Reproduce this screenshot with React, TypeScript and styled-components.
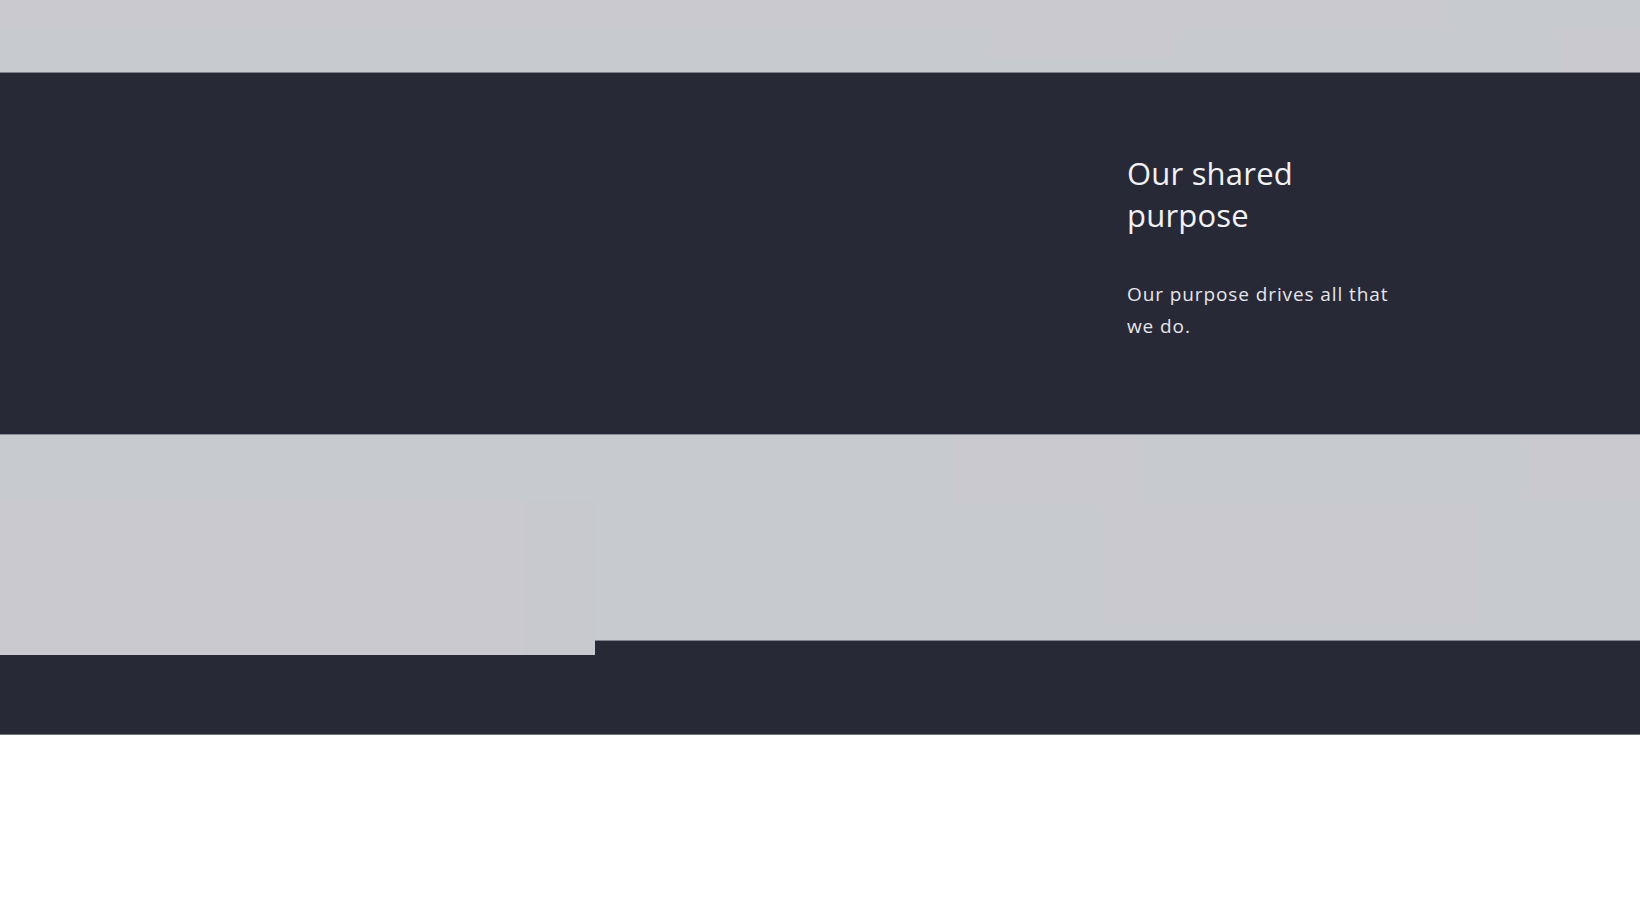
import React from "react";
import styled, { createGlobalStyle } from "styled-components";

const GlobalStyle = createGlobalStyle`
  html, body { margin: 0; padding: 0; background: #ffffff; }
  body { font-family: "Open Sans", "Noto Sans", sans-serif; -webkit-font-smoothing: antialiased; }
  * { box-sizing: border-box; }
`;

const PINK = "#cac9cf";
const BLUE = "#c7cacf";

const rect = (x: number, y: number, w: number, h: number, c: string) =>
  `linear-gradient(${c}, ${c}) ${x}px ${y}px / ${w}px ${h}px no-repeat`;

const Page = styled.div`
  display: flex;
  flex-direction: column;
  width: 100%;
`;

const TopBand = styled.div`
  height: 73px;
  border-bottom: 1px solid #7f828e;
  background:
    ${rect(1443, 0, 197, 28, BLUE)},
    ${rect(0, 0, 1640, 30, PINK)},
    ${rect(990, 30, 190, 28, PINK)},
    ${rect(1560, 30, 80, 42, PINK)},
    ${BLUE};
`;

const Hero = styled.section`
  height: 361px;
  background: #272936;
  display: grid;
  grid-template-columns: 1127px 276px 1fr;
  padding-top: 79px;
`;

const HeroMedia = styled.div``;

const HeroText = styled.div`
  display: flex;
  flex-direction: column;
  gap: 42px;
`;

const Title = styled.h2`
  margin: 0;
  font-family: "Open Sans", "Noto Sans", sans-serif;
  font-weight: 400;
  font-size: 31px;
  line-height: 42px;
  letter-spacing: 0.2px;
  color: #f2f2f4;
`;

const Lead = styled.p`
  margin: 0;
  font-family: "Open Sans", "Noto Sans", sans-serif;
  font-weight: 400;
  font-size: 19px;
  line-height: 32px;
  letter-spacing: 0.9px;
  color: #e6e6ea;
`;

const Gallery = styled.section`
  height: 206px;
  border-top: 1px solid #8a8d98;
  display: flex;
  align-items: flex-start;
  background:
    ${rect(951, 0, 188, 70, PINK)},
    ${rect(1523, 0, 117, 66, PINK)},
    ${rect(1102, 70, 382, 120, PINK)},
    ${BLUE};
`;

const GalleryCard = styled.div`
  width: 595px;
  height: 220px;
  margin-bottom: -14px;
  position: relative;
  z-index: 1;
  background:
    ${rect(89, 66, 434, 154, PINK)},
    ${rect(0, 0, 595, 66, BLUE)},
    ${rect(0, 66, 89, 154, "#c9c9cf")},
    #c8c9cf;
`;

const Footer = styled.footer`
  height: 95px;
  background: #272936;
  border-top: 1px solid #80838e;
  border-bottom: 1px solid #6f7280;
`;

export default function App() {
  return (
    <Page>
      <GlobalStyle />
      <TopBand />
      <Hero>
        <HeroMedia />
        <HeroText>
          <Title>Our shared purpose</Title>
          <Lead>Our purpose drives all that we do.</Lead>
        </HeroText>
      </Hero>
      <Gallery>
        <GalleryCard />
      </Gallery>
      <Footer />
    </Page>
  );
}
